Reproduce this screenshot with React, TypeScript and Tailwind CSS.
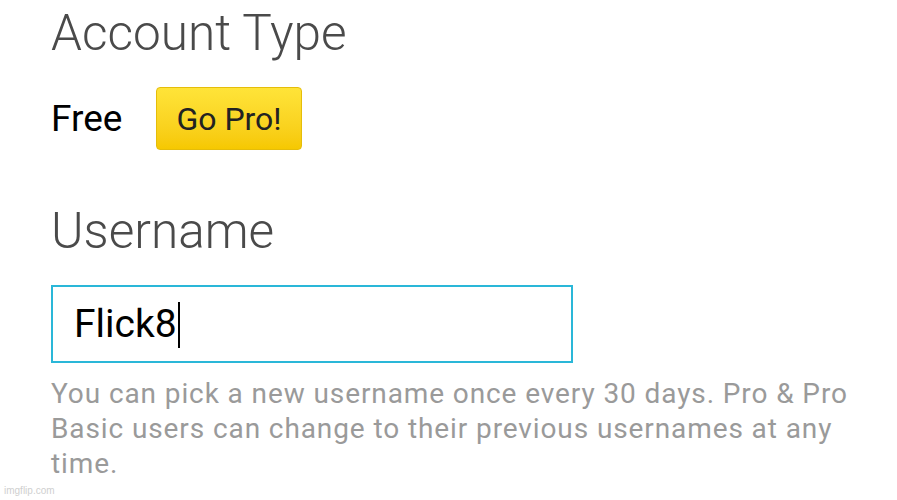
import React from 'react';

const App = () => {
  return (
    <div className="w-[897px] h-[500px] bg-white relative overflow-hidden font-['Roboto',sans-serif]">
      <div className="pl-[51px] pt-[8px] flex flex-col">
        {/* Account type */}
        <h2 className="text-[49.5px] font-light text-[#4a4a4a] leading-[50px]">Account Type</h2>
        <div className="flex items-center mt-[29px]">
          <span className="text-[37px] text-black leading-none w-[105px]">Free</span>
          <button className="w-[146px] h-[63px] rounded-[4px] border border-[#e5bd0a] bg-gradient-to-b from-[#ffe438] to-[#f6c800] text-[32px] text-[#222] leading-none">
            Go Pro!
          </button>
        </div>

        {/* Username */}
        <h2 className="text-[49.5px] font-light text-[#4a4a4a] leading-[50px] mt-[56px]">Username</h2>
        <div className="mt-[29px] w-[522px] h-[78px] border-2 border-[#2ab7d8] flex items-center pl-[21px]">
          <span className="text-[39px] text-black leading-none">Flick8</span>
          <span className="w-[2px] h-[46px] bg-black ml-[1px] mt-[2px]"></span>
        </div>
        <p className="mt-[13px] w-[810px] text-[28px] text-[#9a9a9a] leading-[35px] tracking-[0.9px]">
          You can pick a new username once every 30 days. Pro &amp; Pro Basic users can change to their previous usernames at any time.
        </p>
      </div>
      <div className="absolute left-[4px] bottom-[4px] text-[10px] text-[#cfcfcf] leading-none font-['Liberation_Sans',sans-serif]">imgflip.com</div>
    </div>
  );
};

export default App;
